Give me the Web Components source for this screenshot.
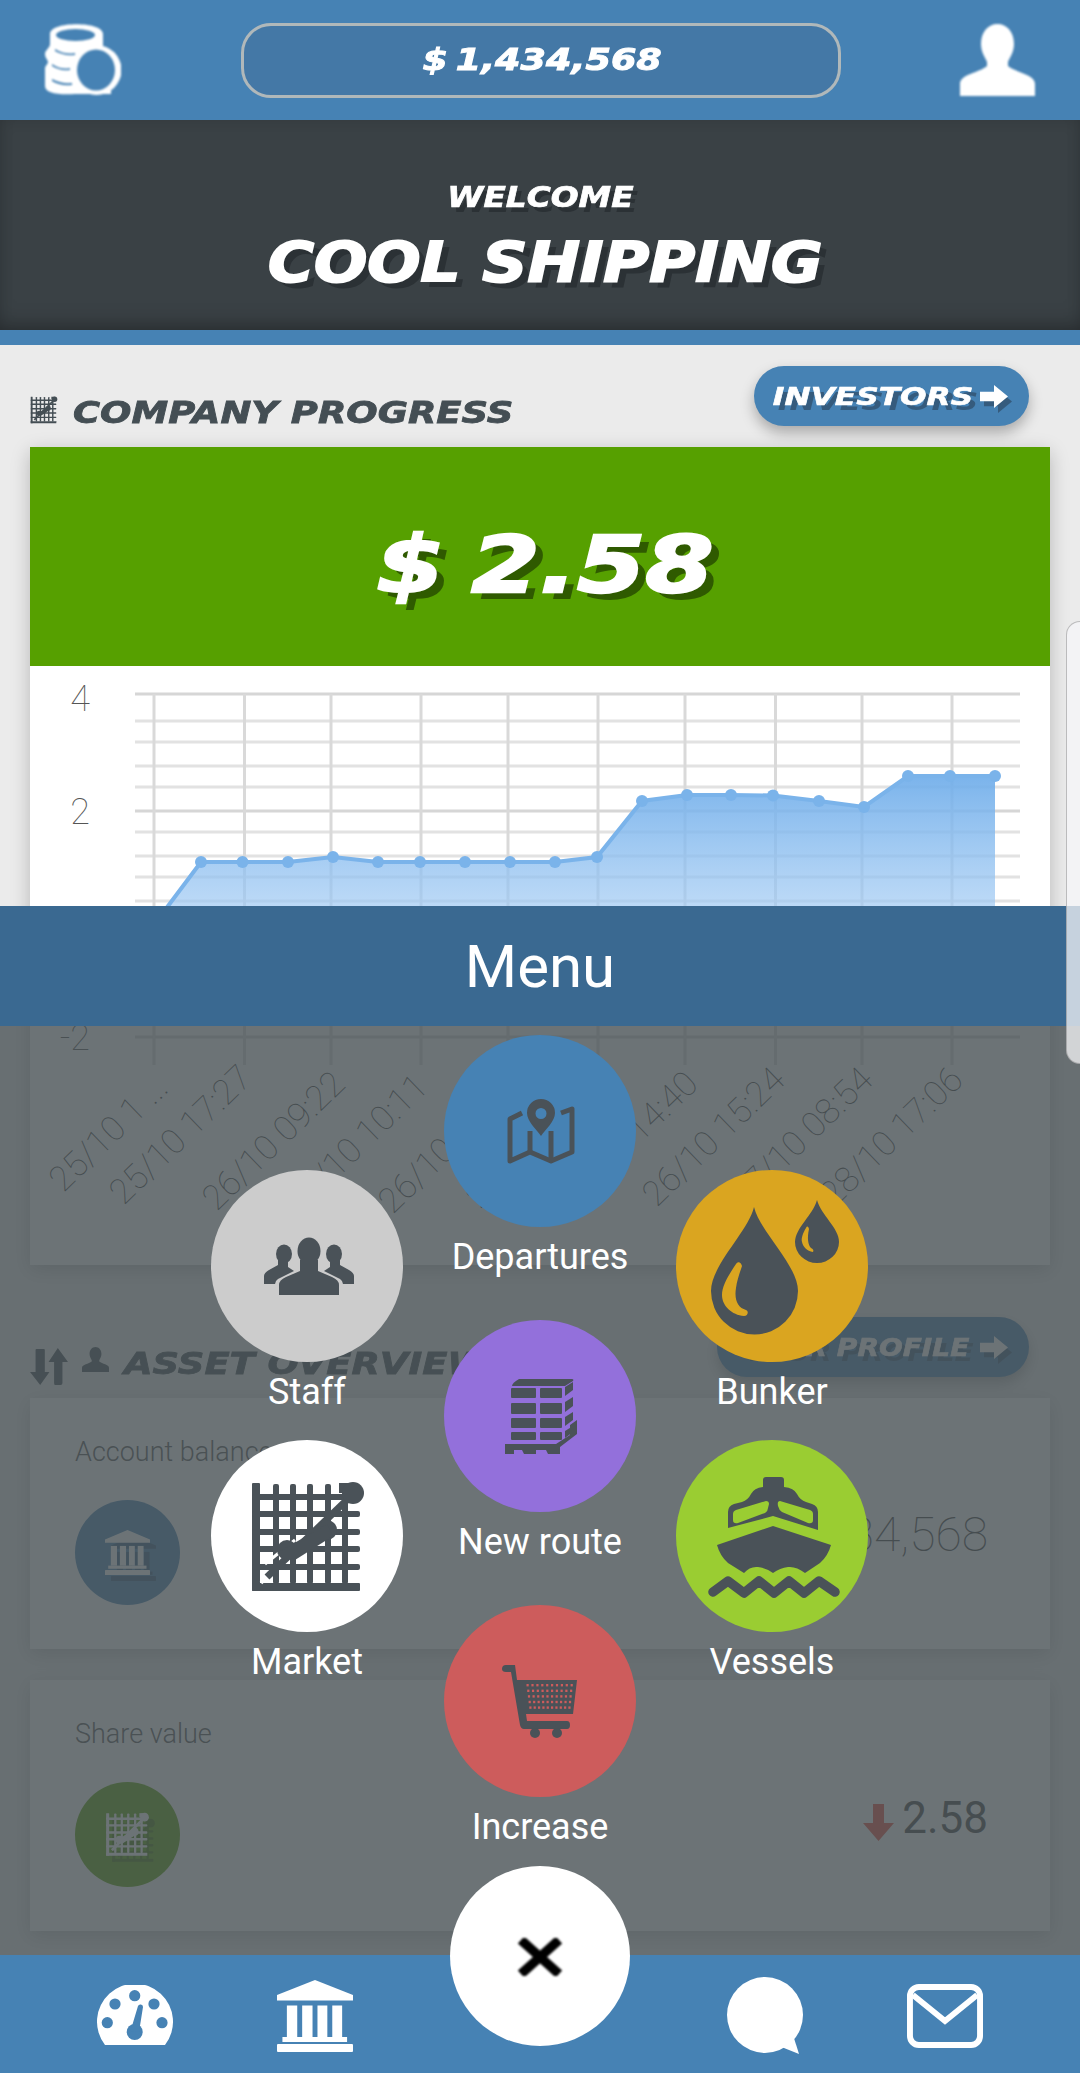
<!DOCTYPE html>
<html lang="en">
<head>
<meta charset="utf-8">
<title>Cool Shipping</title>
<style>
  html, body { margin: 0; padding: 0; background: #ebebeb; }
</style>
</head>
<body>
<ship-app>
  <top-bar balance="$ 1,434,568"></top-bar>
  <welcome-banner greeting="WELCOME" company="COOL SHIPPING"></welcome-banner>
  <page-body>
    <section-head label="COMPANY PROGRESS" action="INVESTORS" icons="chart" top="21"></section-head>
    <progress-card value="$ 2.58"></progress-card>
    <section-head label="ASSET OVERVIEW" action="YOUR PROFILE" icons="updown,person" top="52"></section-head>
    <asset-card label="Account balance" icon="bank" color="steelblue" value="$ 1,434,568" size="48" weight="100" lift="6"></asset-card>
    <asset-card label="Share value" icon="chart" color="#56a000" value="2.58" size="44" weight="400" lift="10" trend="down"></asset-card>
  </page-body>
  <bottom-nav></bottom-nav>
  <action-menu title="Menu">
    <menu-bubble label="Departures" color="steelblue" icon="map" style="--x:444px;--y:1035px"></menu-bubble>
    <menu-bubble label="Staff" color="#cccccc" icon="staff" style="--x:211px;--y:1170px"></menu-bubble>
    <menu-bubble label="Bunker" color="goldenrod" icon="drops" style="--x:676px;--y:1170px"></menu-bubble>
    <menu-bubble label="New route" color="mediumpurple" icon="pallet" style="--x:444px;--y:1320px"></menu-bubble>
    <menu-bubble label="Market" color="#ffffff" icon="market" style="--x:211px;--y:1440px"></menu-bubble>
    <menu-bubble label="Vessels" color="yellowgreen" icon="ship" style="--x:676px;--y:1440px"></menu-bubble>
    <menu-bubble label="Increase" color="indianred" icon="cart" style="--x:444px;--y:1605px"></menu-bubble>
  </action-menu>
  <edge-handle></edge-handle>
</ship-app>

<script>
const DISPLAY_FONT = `"DejaVu Sans", "Liberation Sans", sans-serif`

// ── icons ────────────────────────────────────────────────────────────────────

function marketGrid() {
  const v = [65, 82, 99, 117, 134].map(x => `<rect x="${x - 3}" y="44" width="6" height="100" rx="2"/>`).join('')
  const h = [57, 74, 92, 109, 127].map(y => `<rect x="41" y="${y - 3}" width="108" height="6" rx="2"/>`).join('')
  return `<rect x="41" y="43" width="8" height="108" rx="1"/><rect x="41" y="143" width="108" height="8" rx="1"/>${v}${h}`
}

function marketDiagonal(bg) {
  return `<path d="M50 143 L60 133" stroke="${bg}" stroke-width="3.5" fill="none"/>
    <path d="M56 137 L142 54" stroke="currentColor" stroke-width="7" fill="none"/>
    <path d="M54 124 L84 100" stroke="${bg}" stroke-width="3" fill="none"/>
    <rect x="128" y="43" width="14" height="10" />
    <circle cx="142" cy="53" r="11"/><circle cx="116" cy="90" r="10"/><circle cx="76" cy="110" r="10"/>
    <path d="M68 112 L116 84 L122 96 L84 120 Z"/>`
}

function cartDots() {
  let out = ''
  for (let r = 0; r < 5; r++) {
    for (let c = 0; c < 10; c++) {
      const inset = r * 0.7
      out += `<rect x="${82.5 + inset + c * (4.9 - r * 0.14)}" y="${79 + r * 5.6}" width="2.2" height="2.4"/>`
    }
  }
  return out
}

function palletBlocks() {
  let out = ''
  const rows = [[68, 78], [83, 94], [98, 108], [112, 120]]
  rows.forEach(([a, b]) => {
    out += `<rect x="67" y="${a}" width="25" height="${b - a}" rx="1"/><rect x="96" y="${a}" width="22" height="${b - a}" rx="1"/>`
    out += `<path d="M121 ${a - 1} L129 ${a - 6} V${b - 8} L121 ${b - 2} Z"/>`
  })
  return out
}

const ICONS = {
  coins: { box: '0 0 76 72', body: `
    <path d="M5 10 C5 -3 58 -3 58 10 V30 H66 V70 H30 C12 71 0 69 0 62 V44 C0 42 3 40 3 38 C3 36 0 34 0 30 C0 26 5 24 5 20 Z"/>
    <g fill="steelblue">
      <ellipse cx="30.5" cy="11" rx="19.5" ry="6"/>
      <path d="M10 25 Q20 31 30 29 V31 Q18 32 10 27 Z"/>
      <path d="M7 40 Q16 46 25 44 V46 Q14 47 7 42 Z"/>
      <path d="M7 55 Q16 60 27 59 V61 Q14 62 7 57 Z"/>
    </g>
    <circle cx="51.5" cy="46" r="25"/>
    <ellipse cx="51" cy="46" rx="19" ry="20.5" fill="steelblue"/>` },
  person: { box: '0 0 75 72', body: `
    <path d="M37.5 0 C47 0 54 8 54 20 C54 28 50 33 48 38 L48 42 C56 49 75 50 75 60 V72 H0 V60 C0 50 19 49 27 42 L27 38 C25 33 21 28 21 20 C21 8 28 0 37.5 0 Z"/>` },
  updown: { box: '0 0 41 38', body: `
    <path d="M7 1 H15 Q16 1 16 2 V24 H21 L11 37 L0 24 H6 V2 Q6 1 7 1 Z"/>
    <path d="M30 0 L41 14 H35 V35 Q35 37 33 37 H27 Q26 37 26 35 V14 H20 Z"/>` },
  chart: { box: '38 40 118 114', body: marketGrid() + marketDiagonal('transparent') },
  arrow: { box: '0 0 28 24', body: `<path d="M0 7 H14 V0 L28 12 L14 24 V17 H0 Z"/>` },
  gauge: { box: '0 0 76 60', body: `
    <path d="M8 60 A38 38 0 1 1 68 60 Z"/>
    <g fill="steelblue">
      <circle cx="10.3" cy="37.7" r="5.6"/><circle cx="18" cy="19" r="5.6"/><circle cx="37.7" cy="10.7" r="5.6"/><circle cx="57" cy="19" r="5.6"/><circle cx="65" cy="37.7" r="5.6"/>
      <circle cx="37.7" cy="47" r="8"/><path d="M33.5 46 L41 21 A2.6 2.6 0 0 1 46 22 L42 47 Z"/>
    </g>` },
  bank: { box: '0 0 77 72', body: `
    <path d="M38.5 0 L77 15 V20.5 H0 V15 Z"/>
    <rect x="10" y="25.5" width="10.5" height="31.5"/><rect x="25.5" y="25.5" width="10.5" height="31.5"/><rect x="41" y="25.5" width="10" height="31.5"/><rect x="56" y="25.5" width="10" height="31.5"/>
    <rect x="5.5" y="57" width="65.5" height="5"/><rect x="0" y="64" width="77" height="8" rx="1"/>` },
  chat: { box: '0 0 76 78', body: `
    <circle cx="38" cy="38" r="38"/><path d="M66 58 L72 77 L52 69 Z"/>` },
  mail: { box: '0 0 77 64', body: `
    <g fill="none" stroke="currentColor" stroke-width="6"><rect x="3" y="3" width="71" height="58" rx="9"/><path d="M6 11 L38.5 37 L71 11"/></g>` },
  map: { box: '0 0 192 192', body: `<g transform="translate(64 64)">
    <g fill="none" stroke="currentColor" stroke-width="5" stroke-linejoin="round">
      <path d="M14 14 L2 20 V62 L22 53 L43 62 L64 53 V10 L53 14"/>
      <path d="M22 32 V53 M43 32 V62"/>
    </g>
    <path fill-rule="evenodd" d="M33 0 A14 14 0 0 1 47 14 C47 22 38 30 33 37 C28 30 19 22 19 14 A14 14 0 0 1 33 0 Z M33 9 A5.5 5.5 0 1 0 33 20 A5.5 5.5 0 1 0 33 9 Z"/></g>` },
  staff: { box: '0 0 192 192', body: `<g transform="translate(53 68)">
    <ellipse cx="45" cy="13" rx="11.5" ry="13.5"/>
    <path d="M15 57 V47 Q15 42 22 39 L36 33 V22 H54 V33 L68 39 Q75 42 75 47 V57 Z"/>
    <ellipse cx="20" cy="16" rx="8" ry="9.5"/>
    <path d="M0 46 V38 Q0 35 5 32 L14 27 V20 H24 V29 L30 33 L14 41 Q11 43 11 46 Z"/>
    <ellipse cx="70" cy="16" rx="8" ry="9.5"/>
    <path d="M90 46 V38 Q90 35 85 32 L76 27 V20 H66 V29 L60 33 L76 41 Q79 43 79 46 Z"/></g>` },
  drops: { box: '0 0 192 192', body: `
    <path d="M78 37 C84 62 122 95 122 121 A43.5 43.5 0 0 1 35 121 C35 95 72 62 78 37 Z"/>
    <path fill="goldenrod" d="M60 94 C52 106 46 116 46 125 C46 136 56 145 68 146 C72 146 73 141 70 140 C62 138 58 130 60 118 C61 110 64 102 66 96 C65 92 62 91 60 94 Z"/>
    <path d="M141 30 C145 45 163 58 163 72 A22 21 0 0 1 119 72 C119 58 137 45 141 30 Z"/>
    <path fill="goldenrod" d="M130 58 C127 63 125 68 126 72 C127 77 131 81 137 82 C138 80 137 79 135 78 C132 75 131 68 133 59 C132 56 131 56 130 58 Z"/>` },
  pallet: { box: '0 0 192 192', body: `
    <path d="M75 59 H128 Q130 59 129 61 L121 66 H68 Q68 63 75 59 Z"/>
    ${palletBlocks()}
    <path d="M61 124 H112 L126 115 V105 L133 100 V114 L116 127 V134 H104 L102 130 H92 V134 H80 L78 130 H70 V134 H61 Z"/>` },
  market: { box: '0 0 192 192', body: marketGrid() + marketDiagonal('#ffffff') },
  ship: { box: '0 0 192 192', body: `
    <path fill-rule="evenodd" d="M52 88 V72 Q52 66 58 64 L66 62 Q72 60 75 54 Q78 48 87 47 V40 Q87 37 90 37 H105 Q108 37 108 40 V47 Q118 48 121 54 Q124 60 130 62 L136 64 Q142 66 142 72 V90 L97 76 Z M57 74 V80 Q57 84 62 83 L89 73 Q92 71 92 68 L93 64 Q93 61 90 61 L60 70 Q57 71 57 74 Z M137 74 V80 Q137 84 132 83 L106 72 Q103 70 102 66 Q101 61 104 61 L134 70 Q137 71 137 74 Z"/>
    <path d="M41 105 L97 86 L155 105 Q152 116 144 123 L129 133 Q120 126 112 127 Q104 128 97 133 Q90 128 82 127 Q74 126 68 133 L52 123 Q44 116 41 105 Z"/>
    <path fill="none" stroke="currentColor" stroke-width="9.5" stroke-linejoin="round" stroke-linecap="round" d="M37 152 L52 141 L68 153 L83 141 L98 153 L113 141 L128 153 L143 141 L159 152"/>` },
  cart: { box: '0 0 192 192', body: `
    <path d="M58 64 Q58 60 62 60 H71 L73 75 H133 L129 109 H82 L83 116 H123 Q126 116 126 120 Q126 124 123 124 H80 Q77 124 76 120 L67 67 H62 Q58 67 58 64 Z"/>
    <circle cx="91" cy="128" r="5"/><circle cx="113" cy="128" r="5"/>
    <g fill="indianred">${cartDots()}</g>` },
  close: { box: '0 0 52 38', body: `<path d="M7 2 L45 36 M45 2 L7 36" fill="none" stroke="currentColor" stroke-width="9.5"/>` }
}

function icon(name, style = '') {
  const i = ICONS[name]
  return `<svg viewBox="${i.box}" preserveAspectRatio="none" style="display:block;${style}" fill="currentColor" aria-hidden="true">${i.body}</svg>`
}

// ── base class ───────────────────────────────────────────────────────────────

class ShadowEl extends HTMLElement {
  constructor() {
    super()
    this.attachShadow({ mode: 'open' })
  }
  connectedCallback() { this.shadowRoot.innerHTML = this.markup() }
  markup() { return '<slot></slot>' }
}

// ── layout ───────────────────────────────────────────────────────────────────

class ShipApp extends ShadowEl {
  markup() {
    return `<style>
      :host { display: flex; flex-direction: column; position: relative; width: 1080px; height: 2073px; overflow: hidden; background: #ebebeb; }
    </style><slot></slot>`
  }
}

class TopBar extends ShadowEl {
  markup() {
    return `<style>
      :host { display: flex; align-items: center; height: 120px; background: steelblue; color: #fff; box-sizing: border-box; padding: 0 45px; justify-content: space-between; flex: none; }
      .pill { width: 600px; height: 75px; box-sizing: border-box; border: 3px solid #b0b8ba; border-radius: 30px; background: #4478a6; display: flex; align-items: center; justify-content: center; }
      .amt { font: italic 700 30px/1 ${DISPLAY_FONT}; transform: scaleX(1.22); white-space: pre; -webkit-text-stroke: 1px #fff; word-spacing: -4px; margin-left: 3px; }
      .ic { filter: blur(.8px); }
    </style>
    <div class="ic">${icon('coins', 'width:76px;height:72px')}</div>
    <div class="pill"><span class="amt">${this.getAttribute('balance')}</span></div>
    <div class="ic">${icon('person', 'width:75px;height:72px')}</div>`
  }
}

class WelcomeBanner extends ShadowEl {
  markup() {
    return `<style>
      :host { display: flex; flex-direction: column; align-items: center; height: 225px; box-sizing: border-box; flex: none; color: #fff;
        background: #3a4145; border-bottom: 15px solid steelblue; padding-top: 63px; position: relative; }
      :host::before { content: ''; position: absolute; inset: 0; box-shadow: inset 0 -14px 22px -10px rgba(0,0,0,.28), inset 0 0 14px rgba(0,0,0,.12); }
      span { font-family: ${DISPLAY_FONT}; font-style: italic; font-weight: 700; line-height: 1; white-space: pre; position: relative; }
      .hi { font-size: 29px; transform: scaleX(1.13); text-shadow: 4px 5px 0 #2b3135; -webkit-text-stroke: .7px #fff; }
      .co { font-size: 55px; margin: 23px 0 0 10px; transform: scaleX(1.14); text-shadow: 6px 6px 0 #2b3135; -webkit-text-stroke: 2px #fff; }
    </style>
    <span class="hi">${this.getAttribute('greeting')}</span>
    <span class="co">${this.getAttribute('company')}</span>`
  }
}

class PageBody extends ShadowEl {
  markup() {
    return `<style>
      :host { display: flex; flex-direction: column; flex: 1; min-height: 0; padding: 0 30px; }
    </style><slot></slot>`
  }
}

class SectionHead extends ShadowEl {
  markup() {
    const icons = this.getAttribute('icons').split(',')
    const investors = this.getAttribute('action') === 'INVESTORS'
    const sizes = {
      chart: 'width:28px;height:28px;margin-bottom:4px',
      updown: 'width:38px;height:38px;margin-bottom:-7px',
      person: 'width:27px;height:25px;margin-bottom:7px'
    }
    return `<style>
      :host { display: flex; justify-content: space-between; align-items: flex-end; padding: ${this.getAttribute('top')}px 21px 21px 0; flex: none; }
      .title { display: flex; align-items: flex-end; gap: 14px; color: #444e54; margin-bottom: -2px; }
      .title svg { flex: none; }
      .label { font: italic 700 30px/30px ${DISPLAY_FONT}; transform: scaleX(1.23); transform-origin: left center; white-space: pre; -webkit-text-stroke: .8px #444e54; margin-left: 1px; }
      .btn { display: flex; align-items: center; justify-content: center; gap: 9px; height: 60px; padding: 0 21px; box-sizing: border-box; border-radius: 30px; background: steelblue; color: #fff; box-shadow: 0 7px 14px rgba(0,0,0,.28); }
      .btn span { display: inline-block; font: italic 700 25px/1 ${DISPLAY_FONT}; text-shadow: 4px 5px 0 rgba(40,60,80,.55); -webkit-text-stroke: .6px #fff; transform: scaleX(var(--sx)); white-space: pre; width: var(--w); text-align: center; }
      .btn svg { filter: drop-shadow(4px 5px 0 rgba(40,60,80,.55)); }
    </style>
    <div class="title">${icons.map(n => icon(n, sizes[n])).join('')}<span class="label">${this.getAttribute('label')}</span></div>
    <div class="btn" style="--sx:${investors ? 1.25 : 1.12};--w:${investors ? 196 : 233}px">
      <span>${this.getAttribute('action')}</span>${icon('arrow', 'width:28px;height:23px;flex:none')}
    </div>`
  }
}

class ProgressCard extends ShadowEl {
  markup() {
    return `<style>
      :host { display: block; flex: none; background: #fff; box-shadow: 0 5px 18px rgba(0,0,0,.22); }
      .hero { height: 219px; box-sizing: border-box; padding: 16px 0 0 10px; background: #56a000; display: flex; align-items: center; justify-content: center; color: #fff; }
      .hero span { font: italic 700 78px/1 ${DISPLAY_FONT}; transform: scaleX(1.26); white-space: pre; text-shadow: 7px 7px 0 #2f5a00; -webkit-text-stroke: 2.4px #fff; word-spacing: -6px; }
    </style>
    <div class="hero"><span>${this.getAttribute('value')}</span></div>
    <line-chart></line-chart>`
  }
}

class LineChart extends ShadowEl {
  markup() {
    const majors = [694, 811, 1037]
    const minors = [721, 742, 766, 787, 832, 856, 877, 901]
    const xs = [154, 244.5, 331, 421, 508, 598, 685, 775.5, 862, 952]
    const labels = [
      ['25/10 1 ...', 163, 1083], ['25/10 17:27', 247, 1073], ['26/10 09:22', 340, 1079], ['26/10 10:11', 423, 1082],
      ['26/10 11:05', 516, 1082], ['26/10 12:30', 603, 1077], ['26/10 14:40', 693, 1079], ['26/10 15:24', 780, 1075],
      ['27/10 08:54', 868, 1075], ['28/10 17:06', 958, 1075]
    ]
    const pts = [[201, 862], [242.5, 862], [288, 862], [333, 857], [378, 862], [420, 862], [465, 862], [510, 862], [555, 862], [597, 857],
      [642, 801], [687, 795], [731, 795], [773, 795.5], [819, 801], [864, 807], [908, 776], [950, 776], [995, 776]]
    const line = 'M150 930 L' + pts.map(p => p.join(' ')).join(' L')
    return `<style>
      :host { display: block; height: 599px; }
      svg { display: block; }
      text { font-family: Roboto, sans-serif; font-weight: 100; font-size: 36px; fill: #555; }
      .t { font-size: 35px; fill: #444; }
    </style>
    <svg width="1020" height="599" viewBox="30 666 1020 599">
      <defs><linearGradient id="area" x1="0" y1="776" x2="0" y2="940" gradientUnits="userSpaceOnUse">
        <stop offset="0" stop-color="#6fadea" stop-opacity=".92"/><stop offset="1" stop-color="#a9cff5" stop-opacity=".62"/>
      </linearGradient></defs>
      ${majors.map(y => `<rect x="135" y="${y - 1.5}" width="885" height="3" fill="#d6d6d6"/>`).join('')}
      ${minors.map(y => `<rect x="135" y="${y - 1.5}" width="885" height="3" fill="#e2e2e2"/>`).join('')}
      ${xs.map(x => `<rect x="${x - 1.5}" y="694" width="3" height="371" fill="#d9d9d9"/>`).join('')}
      <path d="${line} V930 Z" fill="url(#area)"/>
      <path d="${line}" fill="none" stroke="#7ab3ea" stroke-width="4"/>
      ${pts.map(p => `<circle cx="${p[0]}" cy="${p[1]}" r="6" fill="#7ab3ea"/>`).join('')}
      <text x="90" y="711" text-anchor="end">4</text>
      <text x="90" y="824" text-anchor="end">2</text>
      <text x="90" y="1050" text-anchor="end">-2</text>
      ${labels.map(([t, x, y]) => `<text class="t" x="${x}" y="${y + 10}" text-anchor="end" transform="rotate(-44 ${x} ${y})">${t}</text>`).join('')}
    </svg>`
  }
}

class AssetCard extends ShadowEl {
  markup() {
    const a = n => this.getAttribute(n)
    const down = a('trend') === 'down'
      ? `<svg width="31" height="37" viewBox="0 0 31 37" style="flex:none;margin:12px 8px 0 0" aria-hidden="true"><path d="M10 0 H21 V19 H31 L15.5 37 L0 19 H10 Z" fill="#e84c3d"/></svg>`
      : ''
    return `<style>
      :host { display: block; flex: none; height: 251px; margin-bottom: 31px; box-sizing: border-box; padding: 37px 62px 0 45px; background: #fff; box-shadow: 0 5px 18px rgba(0,0,0,.2); color: #444; font-family: Roboto, sans-serif; }
      .label { font-size: 27px; line-height: 34px; font-weight: 300; color: #555; }
      .row { display: flex; justify-content: space-between; margin-top: 31px; }
      .disc { width: 105px; height: 105px; border-radius: 50%; display: flex; align-items: center; justify-content: center; color: #fff; flex: none; }
      .disc svg { filter: drop-shadow(6px 6px 0 rgba(0,0,0,.28)); }
      .val { display: flex; align-items: flex-start; margin-top: ${a('lift')}px; }
      .num { line-height: 1.2; white-space: pre; }
    </style>
    <div class="label">${a('label')}</div>
    <div class="row">
      <div class="disc" style="background:${a('color')}">${icon(a('icon'), 'width:45px;height:45px')}</div>
      <div class="val">${down}<span class="num" style="font-size:${a('size')}px;font-weight:${a('weight')}">${a('value')}</span></div>
    </div>`
  }
}

class BottomNav extends ShadowEl {
  markup() {
    const box = (name, w, h) => `<span style="width:${w}px;height:${h}px;display:block">${icon(name, `width:${w}px;height:${h}px`)}</span>`
    return `<style>
      :host { display: grid; grid-template-columns: 97px 77px 103px 76px 374px 76px 104px 76px; align-items: start; height: 118px; background: steelblue; color: #fff; flex: none; }
      .a { margin-top: 30px; grid-column: 2; } .b { margin-top: 25px; grid-column: 4; } .c { margin-top: 22px; grid-column: 6; } .d { margin-top: 29px; grid-column: 8; }
    </style>
    <div class="a">${box('gauge', 76, 60)}</div>
    <div class="b">${box('bank', 76, 72)}</div>
    <div class="c">${box('chat', 76, 78)}</div>
    <div class="d">${box('mail', 76, 64)}</div>`
  }
}

// ── overlay ──────────────────────────────────────────────────────────────────

class ActionMenu extends ShadowEl {
  markup() {
    return `<style>
      :host { position: absolute; inset: 0; display: block; font-family: Roboto, sans-serif; }
      .dim { position: absolute; left: 0; right: 0; top: 906px; bottom: 118px; background: rgba(71,80,84,.8); }
      .bar { position: absolute; left: 0; right: 0; top: 906px; height: 120px; background: #3a6991; color: #fff; font-size: 60px; line-height: 122px; text-align: center; }
      .close { position: absolute; left: 450px; top: 1866px; width: 180px; height: 180px; border-radius: 50%; background: #fff; display: flex; align-items: center; justify-content: center; color: #000; filter: blur(.5px); }
      .close svg { filter: blur(1.2px); margin-top: 2px; }
    </style>
    <div class="dim"></div>
    <div class="bar">${this.getAttribute('title')}</div>
    <slot></slot>
    <div class="close">${icon('close', 'width:52px;height:38px')}</div>`
  }
}

class MenuBubble extends ShadowEl {
  markup() {
    const a = n => this.getAttribute(n)
    return `<style>
      :host { position: absolute; left: var(--x); top: var(--y); width: 192px; display: flex; flex-direction: column; align-items: center; }
      .disc { width: 192px; height: 192px; border-radius: 50%; color: #4a5258; flex: none; }
      .label { margin-top: 9px; font-size: 36px; line-height: 42px; color: #fff; white-space: pre; }
    </style>
    <div class="disc" style="background:${a('color')}">${icon(a('icon'), 'width:192px;height:192px')}</div>
    <div class="label">${a('label')}</div>`
  }
}

class EdgeHandle extends ShadowEl {
  markup() {
    return `<style>
      :host { position: absolute; right: 0; top: 621px; width: 14px; height: 443px; box-sizing: border-box; background: rgba(245,245,248,.75); border: 1px solid rgba(120,120,120,.45); border-right: none; border-radius: 20px 0 0 20px; }
    </style>`
  }
}

customElements.define('ship-app', ShipApp)
customElements.define('top-bar', TopBar)
customElements.define('welcome-banner', WelcomeBanner)
customElements.define('page-body', PageBody)
customElements.define('section-head', SectionHead)
customElements.define('progress-card', ProgressCard)
customElements.define('line-chart', LineChart)
customElements.define('asset-card', AssetCard)
customElements.define('bottom-nav', BottomNav)
customElements.define('action-menu', ActionMenu)
customElements.define('menu-bubble', MenuBubble)
customElements.define('edge-handle', EdgeHandle)
</script>
</body>
</html>
